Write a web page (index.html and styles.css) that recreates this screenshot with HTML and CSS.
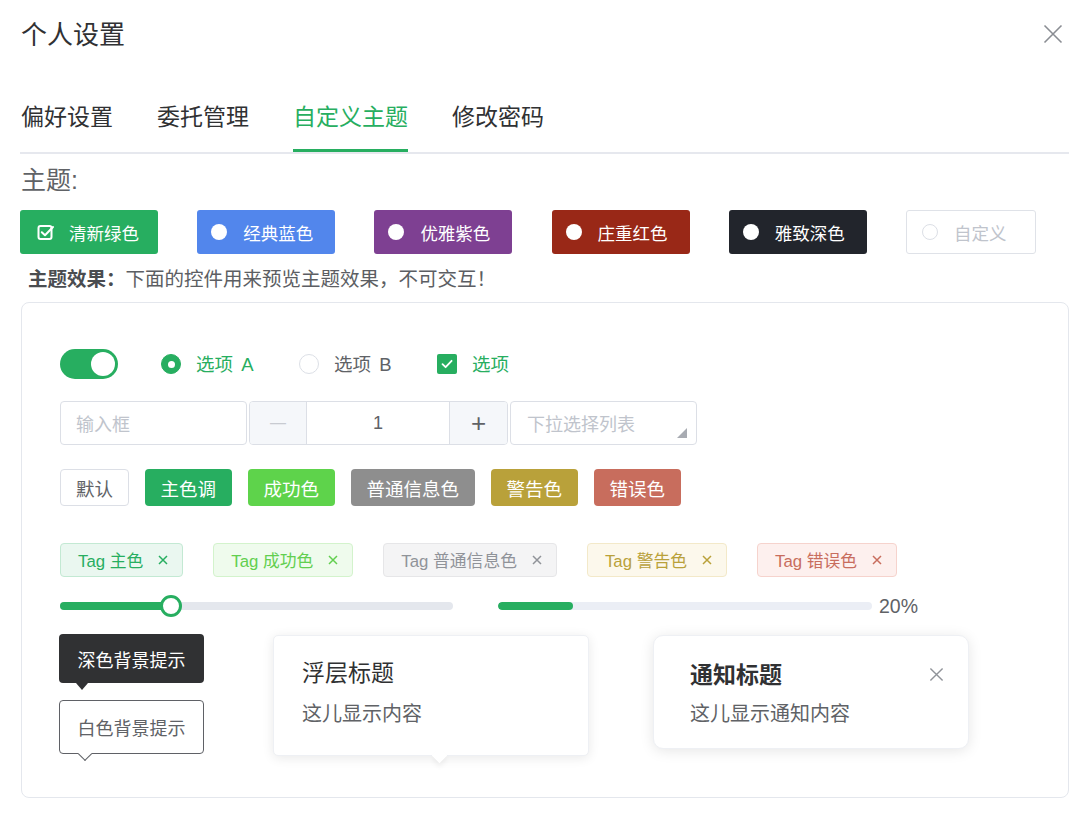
FILE: index.html
```html
<!DOCTYPE html>
<html lang="zh-CN">
<head>
<meta charset="utf-8">
<title>个人设置</title>
<link rel="stylesheet" href="styles.css">
</head>
<body>
<div class="dialog">
  <header class="dlg-header">
    <h1 class="dlg-title">个人设置</h1>
    <svg class="dlg-close" viewBox="0 0 20 20"><path d="M1.5 1.5 L18.5 18.5 M18.5 1.5 L1.5 18.5"/></svg>
  </header>

  <nav class="tabs">
    <span class="tab">偏好设置</span>
    <span class="tab">委托管理</span>
    <span class="tab active">自定义主题</span>
    <span class="tab">修改密码</span>
  </nav>

  <div class="section-label">主题:</div>

  <div class="themes">
    <div class="theme t-green">
      <svg class="theme-check" viewBox="0 0 18 18"><rect x="1.5" y="3" width="13" height="13" rx="2"/><path d="M4.8 9.2 L8 12.2 L16 4"/></svg>
      <span>清新绿色</span>
    </div>
    <div class="theme t-blue"><i class="dot"></i><span>经典蓝色</span></div>
    <div class="theme t-purple"><i class="dot"></i><span>优雅紫色</span></div>
    <div class="theme t-red"><i class="dot"></i><span>庄重红色</span></div>
    <div class="theme t-dark"><i class="dot"></i><span>雅致深色</span></div>
    <div class="theme t-custom"><i class="dot"></i><span>自定义</span></div>
  </div>

  <p class="tip"><b>主题效果：</b>下面的控件用来预览主题效果，不可交互！</p>

  <div class="preview">
    <div class="row row-options">
      <span class="switch"><i class="knob"></i></span>
      <label class="opt checked"><i class="radio on"></i><span>选项 A</span></label>
      <label class="opt"><i class="radio"></i><span>选项 B</span></label>
      <label class="opt checked">
        <svg class="checkbox" viewBox="0 0 20 20"><rect width="20" height="20" rx="2"/><path d="M5.5 10.2 L8.6 13.2 L14.6 6.8"/></svg>
        <span>选项</span>
      </label>
    </div>

    <div class="row row-inputs">
      <div class="field input"><span class="ph">输入框</span></div>
      <div class="field number">
        <span class="num-btn minus">—</span>
        <span class="num-val">1</span>
        <span class="num-btn plus">+</span>
      </div>
      <div class="field select">
        <span class="ph">下拉选择列表</span>
        <svg class="sel-tri" viewBox="0 0 10 10"><polygon points="10,0 10,10 0,10"/></svg>
      </div>
    </div>

    <div class="row row-buttons">
      <span class="btn b-default">默认</span>
      <span class="btn b-primary">主色调</span>
      <span class="btn b-success">成功色</span>
      <span class="btn b-info">普通信息色</span>
      <span class="btn b-warning">警告色</span>
      <span class="btn b-danger">错误色</span>
    </div>

    <div class="row row-tags">
      <span class="tag g-primary">Tag 主色<svg class="tag-x" viewBox="0 0 10 10"><path d="M1 1 L9 9 M9 1 L1 9"/></svg></span>
      <span class="tag g-success">Tag 成功色<svg class="tag-x" viewBox="0 0 10 10"><path d="M1 1 L9 9 M9 1 L1 9"/></svg></span>
      <span class="tag g-info">Tag 普通信息色<svg class="tag-x" viewBox="0 0 10 10"><path d="M1 1 L9 9 M9 1 L1 9"/></svg></span>
      <span class="tag g-warning">Tag 警告色<svg class="tag-x" viewBox="0 0 10 10"><path d="M1 1 L9 9 M9 1 L1 9"/></svg></span>
      <span class="tag g-danger">Tag 错误色<svg class="tag-x" viewBox="0 0 10 10"><path d="M1 1 L9 9 M9 1 L1 9"/></svg></span>
    </div>

    <div class="row row-bars">
      <div class="slider">
        <div class="slider-fill" style="width: 111px"></div>
        <i class="slider-handle"></i>
      </div>
      <div class="progress">
        <div class="progress-fill" style="width: 20%"></div>
      </div>
      <span class="progress-text">20%</span>
    </div>

    <div class="row row-popups">
      <div class="tips-col">
        <div class="tooltip tt-dark">深色背景提示</div>
        <div class="tooltip tt-light">白色背景提示</div>
      </div>
      <div class="popover">
        <div class="pop-title">浮层标题</div>
        <div class="pop-body">这儿显示内容</div>
      </div>
      <div class="notify">
        <div class="notify-head">
          <span class="notify-title">通知标题</span>
          <svg class="notify-x" viewBox="0 0 16 16"><path d="M1.5 1.5 L14.5 14.5 M14.5 1.5 L1.5 14.5"/></svg>
        </div>
        <div class="pop-body">这儿显示通知内容</div>
      </div>
    </div>
  </div>
</div>
</body>
</html>
```

FILE: styles.css
```css
* { box-sizing: border-box; margin: 0; padding: 0; }

body {
  font-family: "Liberation Sans", "Noto Sans CJK SC", sans-serif;
  color: #303133;
  background: #ffffff;
  width: 1080px;
}

.dialog { padding: 0 11px 0 20px; }

/* header */
.dlg-header {
  height: 70px;
  display: flex;
  align-items: center;
  justify-content: space-between;
}
.dlg-title {
  font-size: 26px;
  font-weight: 400;
  line-height: 30px;
  margin-left: 1px;
  color: #303133;
}
.dlg-close {
  width: 20px;
  height: 20px;
  margin-right: 6px;
  margin-top: -2px;
  fill: none;
  stroke: #8a8d93;
  stroke-width: 1.6;
}

/* tabs */
.tabs {
  display: flex;
  gap: 44px;
  border-bottom: 2px solid #e6e8ee;
}
.tab {
  font-size: 23px;
  line-height: 30px;
  padding-top: 32px;
  padding-bottom: 17px;
  border-bottom: 3px solid transparent;
  color: #303133;
}
.tab:first-child { margin-left: 1px; }
.tab.active {
  color: #27ae60;
  border-bottom-color: #27ae60;
}

.section-label {
  margin-top: 11px;
  padding-left: 1px;
  font-size: 25px;
  line-height: 30px;
  color: #606266;
}

/* theme buttons */
.themes {
  margin-top: 15px;
  display: grid;
  grid-template-columns: repeat(6, 177.2px);
}
.theme {
  width: 138px;
  height: 44px;
  border-radius: 3px;
  display: flex;
  align-items: center;
  padding-left: 14px;
  color: #ffffff;
  font-size: 17.5px;
}
.theme .dot {
  width: 16px;
  height: 16px;
  border-radius: 50%;
  background: #ffffff;
  margin-right: 16px;
  flex: none;
}
.theme-check {
  width: 18px;
  height: 18px;
  margin-left: 3px;
  margin-right: 14px;
  fill: none;
  stroke: #ffffff;
  stroke-width: 2;
  stroke-linecap: round;
  stroke-linejoin: round;
}
.t-green  { background: #27ae60; }
.t-blue   { background: #5286ec; }
.t-purple { background: #7e4092; }
.t-red    { background: #992817; }
.t-dark   { background: #22252c; }
.t-custom {
  width: 130px;
  background: #ffffff;
  border: 1px solid #dfe2e8;
  color: #c0c4cc;
  padding-left: 15px;
}
.t-custom .dot {
  background: #ffffff;
  border: 1px solid #dcdfe6;
}

.tip {
  margin-top: 13px;
  padding-left: 8px;
  font-size: 19.5px;
  line-height: 24px;
  color: #5c5e63;
}
.tip b { font-weight: 700; color: #4a4c50; }

/* preview box */
.preview {
  margin: 11px 0 0 1px;
  border: 1px solid #e4e7ed;
  border-radius: 8px;
  padding: 46px 38px 41px;
}
.row { display: flex; align-items: center; }

/* row 1 */
.row-options { height: 30px; }
.switch {
  width: 58px;
  height: 30px;
  border-radius: 15px;
  background: #27ae60;
  display: flex;
  align-items: center;
  justify-content: flex-end;
  padding-right: 3px;
  margin-right: 43px;
  flex: none;
}
.knob {
  width: 24px;
  height: 24px;
  border-radius: 50%;
  background: #ffffff;
}
.opt {
  width: 138px;
  flex: none;
  display: flex;
  align-items: center;
  font-size: 18.5px;
  word-spacing: 3px;
  color: #606266;
}
.opt span { margin-top: -3px; }
.opt.checked { color: #27ae60; }
.radio {
  width: 20px;
  height: 20px;
  border-radius: 50%;
  border: 1px solid #dcdfe6;
  background: #ffffff;
  margin-right: 15px;
  flex: none;
  display: flex;
  align-items: center;
  justify-content: center;
}
.radio.on {
  background: #27ae60;
  border-color: #27ae60;
}
.radio.on::after {
  content: "";
  width: 7px;
  height: 7px;
  border-radius: 50%;
  background: #ffffff;
}
.checkbox {
  width: 20px;
  height: 20px;
  margin-right: 15px;
  flex: none;
}
.checkbox rect { fill: #27ae60; }
.checkbox path {
  fill: none;
  stroke: #ffffff;
  stroke-width: 1.8;
  stroke-linecap: round;
  stroke-linejoin: round;
}

/* row 2 */
.row-inputs {
  margin-top: 22px;
  height: 44px;
  gap: 2px;
  align-items: stretch;
}
.field {
  border: 1px solid #dcdfe6;
  border-radius: 4px;
  font-size: 18px;
  display: flex;
  align-items: center;
  background: #ffffff;
}
.input { width: 187px; padding-left: 15px; }
.ph { color: #c0c4cc; }
.number { width: 259px; overflow: hidden; }
.num-btn {
  width: 57px;
  height: 100%;
  background: #f5f7fa;
  display: flex;
  align-items: center;
  justify-content: center;
  flex: none;
}
.minus {
  border-right: 1px solid #dcdfe6;
  color: #c8cbd1;
  font-size: 16px;
}
.plus {
  border-left: 1px solid #dcdfe6;
  color: #606266;
  font-size: 26px;
  font-weight: 300;
  width: 58px;
}
.num-val {
  flex: 1;
  text-align: center;
  color: #606266;
}
.select {
  width: 187px;
  padding-left: 16px;
  padding-right: 9px;
  justify-content: space-between;
}
.sel-tri {
  width: 10px;
  height: 10px;
  align-self: flex-end;
  margin-bottom: 6px;
  fill: #a8abb2;
}

/* row 3 buttons */
.row-buttons {
  margin-top: 24px;
  height: 37px;
  gap: 15.5px;
}
.btn {
  height: 37px;
  padding: 0 15px;
  border-radius: 4px;
  font-size: 18.5px;
  display: flex;
  align-items: center;
  color: #ffffff;
  border: 1px solid transparent;
}
.b-default { background: #ffffff; border-color: #dcdfe6; color: #606266; }
.b-primary { background: #27ae60; }
.b-success { background: #5ed34b; }
.b-info    { background: #8e8e8e; }
.b-warning { background: #b9a13a; }
.b-danger  { background: #c86d5d; }

/* tags */
.row-tags {
  margin-top: 37px;
  height: 34px;
  gap: 30px;
}
.tag {
  height: 34px;
  padding: 0 14px 0 17px;
  border-radius: 4px;
  border: 1px solid;
  font-size: 16.8px;
  display: flex;
  align-items: center;
}
.tag-x {
  width: 10px;
  height: 10px;
  margin-left: 15px;
  fill: none;
  stroke: currentColor;
  stroke-width: 1.5;
}
.g-primary { background: #eaf7f0; border-color: #c3e9d3; color: #27ae60; }
.g-success { background: #effbed; border-color: #d3f3cc; color: #62cf4f; }
.g-info    { background: #f4f4f5; border-color: #e6e6e8; color: #909399; }
.g-warning { background: #fcf8ec; border-color: #f3e9c9; color: #b9a13a; }
.g-danger  { background: #fdf0ee; border-color: #f6d3cd; color: #c86d5d; }

/* slider & progress */
.row-bars {
  margin-top: 18px;
  height: 22px;
}
.slider {
  width: 393px;
  height: 8px;
  border-radius: 4px;
  background: #e4e7ed;
  display: flex;
  align-items: center;
  flex: none;
}
.slider-fill {
  height: 8px;
  border-radius: 4px 0 0 4px;
  background: #27ae60;
}
.slider-handle {
  width: 22px;
  height: 22px;
  border-radius: 50%;
  background: #ffffff;
  border: 3px solid #27ae60;
  margin-left: -11px;
  flex: none;
}
.progress {
  margin-left: 45px;
  width: 374px;
  height: 8px;
  border-radius: 4px;
  background: #ebeef5;
  flex: none;
  overflow: hidden;
}
.progress-fill {
  height: 100%;
  border-radius: 4px;
  background: #27ae60;
}
.progress-text {
  margin-left: 7px;
  font-size: 19.5px;
  color: #606266;
}

/* popups */
.row-popups {
  margin-top: 17px;
  align-items: flex-start;
}
.tips-col {
  width: 145px;
  flex: none;
  display: flex;
  flex-direction: column;
  gap: 17px;
  margin-left: -1px;
}
.tooltip {
  position: relative;
  border-radius: 4px;
  font-size: 18px;
  display: flex;
  align-items: center;
  justify-content: center;
}
.tt-dark {
  height: 49px;
  background: #303133;
  color: #ffffff;
}
.tt-dark::after {
  content: "";
  position: absolute;
  left: 17px;
  bottom: -7px;
  border-left: 6px solid transparent;
  border-right: 6px solid transparent;
  border-top: 7px solid #303133;
}
.tt-light {
  height: 54px;
  background: #ffffff;
  border: 1px solid #5f6166;
  color: #606266;
}
.tt-light::after {
  content: "";
  position: absolute;
  left: 20px;
  bottom: -6px;
  width: 9px;
  height: 9px;
  background: #ffffff;
  border-right: 1px solid #5f6166;
  border-bottom: 1px solid #5f6166;
  transform: rotate(45deg);
}

.popover {
  position: relative;
  margin-left: 69px;
  margin-top: 1px;
  width: 316px;
  height: 121px;
  background: #ffffff;
  border: 1px solid #eef0f4;
  border-radius: 5px;
  box-shadow: 0 2px 12px rgba(0, 0, 0, 0.09);
  padding: 22px 0 0 28px;
}
.popover::after {
  content: "";
  position: absolute;
  left: 160px;
  bottom: -6px;
  width: 11px;
  height: 11px;
  background: #ffffff;
  transform: rotate(45deg);
  box-shadow: 3px 3px 5px rgba(0, 0, 0, 0.05);
}
.pop-title {
  font-size: 23px;
  line-height: 30px;
  color: #303133;
}
.pop-body {
  margin-top: 13px;
  font-size: 20px;
  line-height: 26px;
  color: #606266;
}

.notify {
  margin-left: 64px;
  margin-top: 1px;
  width: 316px;
  height: 114px;
  background: #ffffff;
  border: 1px solid #eef0f4;
  border-radius: 10px;
  box-shadow: 0 2px 14px rgba(0, 0, 0, 0.1);
  padding: 22px 24px 0 36px;
}
.notify-head {
  display: flex;
  align-items: center;
  justify-content: space-between;
  height: 30px;
}
.notify-title {
  font-size: 23px;
  font-weight: 700;
  color: #303133;
}
.notify-x {
  width: 15px;
  height: 15px;
  fill: none;
  stroke: #909399;
  stroke-width: 1.5;
  margin-top: 2px;
}
```
